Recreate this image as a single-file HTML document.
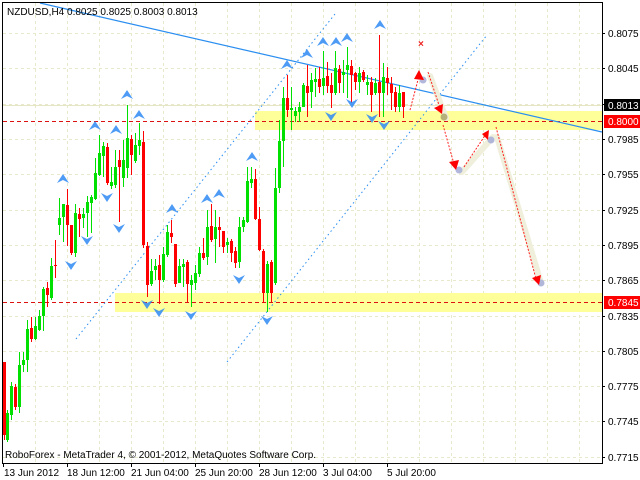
<!DOCTYPE html>
<html><head><meta charset="utf-8"><style>
html,body{margin:0;padding:0;background:#fff;width:640px;height:480px;overflow:hidden}
svg{display:block}
text{font-family:"Liberation Sans",sans-serif;font-size:10px}
</style></head><body>
<svg id="c" width="640" height="480" xmlns="http://www.w3.org/2000/svg">
<rect x="0" y="0" width="640" height="480" fill="#fff"/>
<g id="grid" stroke="#e8e8cc" stroke-width="1" stroke-dasharray="3,3"></g>
<rect x="255" y="111" width="347" height="19" fill="#ffff99"/>
<rect x="115" y="293" width="487" height="19" fill="#ffff99"/>
<line x1="3" y1="105.5" x2="602" y2="105.5" stroke="#e6e6c4" stroke-width="1"/>
<line x1="3" y1="121.5" x2="602" y2="121.5" stroke="#dd1111" stroke-dasharray="4,3"/>
<line x1="3" y1="302.5" x2="602" y2="302.5" stroke="#dd1111" stroke-dasharray="4,3"/>
<line x1="40" y1="3" x2="602" y2="132" stroke="#2a8ef0" stroke-width="1.2"/>
<line x1="76" y1="339" x2="335" y2="14" stroke="#2a8ef0" stroke-dasharray="1.5,3"/>
<line x1="227" y1="362" x2="487" y2="35" stroke="#2a8ef0" stroke-dasharray="1.5,3"/>
<g id="candles"></g>
<g id="marks"></g>
<g fill="none" stroke="#efefdc" stroke-width="6" stroke-linecap="round">
<polyline points="430,76 446,118"/>
<polyline points="462,172 493,137"/>
<polyline points="497,137 541,283"/>
</g>
<g fill="#aab0d8" opacity="0.9">
<circle cx="423" cy="80" r="3.5"/><circle cx="444" cy="117" r="3.5" fill="#b0aa70"/><circle cx="459" cy="170" r="3.5"/><circle cx="491" cy="140" r="3.5"/><circle cx="541" cy="283" r="3.5"/>
</g>
<g stroke="#ff2222" stroke-width="1" stroke-dasharray="2,1.5" fill="none">
<line x1="410" y1="110" x2="419" y2="76"/>
<line x1="428" y1="72" x2="440" y2="108"/>
<line x1="443" y1="125" x2="454" y2="164"/>
<line x1="464" y1="167" x2="486" y2="134"/>
<line x1="496" y1="127" x2="536" y2="279"/>
</g>
<g fill="#ff0000">
<polygon points="419,70 414,79 424,80"/>
<polygon points="442,114 434,108 443,104"/>
<polygon points="456,170 449,162 459,160"/>
<polygon points="489,130 482,134 488,140"/>
<polygon points="539,285 532,278 541,275"/>
</g>
<text x="418" y="47" fill="#ee2222" font-size="11" font-weight="bold">×</text>
<line x1="2.5" y1="2" x2="2.5" y2="463" stroke="#000"/>
<line x1="2" y1="2.5" x2="603" y2="2.5" stroke="#000"/>
<line x1="602.5" y1="2" x2="602.5" y2="463" stroke="#000"/>
<line x1="2" y1="463.5" x2="603" y2="463.5" stroke="#000"/>
<g id="ticks" stroke="#000"></g>
<text x="7" y="15" fill="#000" font-size="10.5">NZDUSD,H4  0.8025 0.8025 0.8003 0.8013</text>
<text x="5" y="458" fill="#000" font-size="12">RoboForex - MetaTrader 4, © 2001-2012, MetaQuotes Software Corp.</text>
<g fill="#000" font-size="9.5">
<text x="608" y="37">0.8075</text>
<text x="608" y="72">0.8045</text>
<text x="608" y="143">0.7985</text>
<text x="608" y="178">0.7955</text>
<text x="608" y="214">0.7925</text>
<text x="608" y="249">0.7895</text>
<text x="608" y="284">0.7865</text>
<text x="608" y="320">0.7835</text>
<text x="608" y="355">0.7805</text>
<text x="608" y="390">0.7775</text>
<text x="608" y="425">0.7745</text>
<text x="608" y="461">0.7715</text>
</g>
<rect x="604" y="99" width="36" height="12" fill="#000"/>
<text x="608" y="109" fill="#fff" font-size="9.5">0.8013</text>
<rect x="604" y="115" width="36" height="13" fill="#ff0000"/>
<text x="608" y="125" fill="#fff" font-size="9.5">0.8000</text>
<rect x="604" y="296" width="36" height="13" fill="#ff0000"/>
<text x="608" y="306" fill="#fff" font-size="9.5">0.7845</text>
<g fill="#000" font-size="9.5">
<text x="4" y="476">13 Jun 2012</text>
<text x="67" y="476">18 Jun 12:00</text>
<text x="131" y="476">21 Jun 04:00</text>
<text x="195" y="476">25 Jun 20:00</text>
<text x="259" y="476">28 Jun 12:00</text>
<text x="323" y="476">3 Jul 04:00</text>
<text x="387" y="476">5 Jul 20:00</text>
</g>
</svg>
<script>
var NS="http://www.w3.org/2000/svg";
function el(p,t,a){var e=document.createElementNS(NS,t);for(var k in a)e.setAttribute(k,a[k]);p.appendChild(e);return e;}
var g=document.getElementById('grid');
for(var x=35;x<602;x+=32)el(g,'line',{x1:x+.5,y1:3,x2:x+.5,y2:463});
[33,68,104,139,174,210,245,280,316,351,386,421,457].forEach(function(y){el(g,'line',{x1:3,y1:y+.5,x2:602,y2:y+.5});});
var t=document.getElementById('ticks');
[3,67,131,195,259,323,387].forEach(function(x){el(t,'line',{x1:x+.5,y1:463,x2:x+.5,y2:467});});
[33,68,104,139,174,210,245,280,316,351,386,421,457].forEach(function(y){el(t,'line',{x1:602,y1:y+.5,x2:605,y2:y+.5});});
var C=[
[4,362,435,362,440,'r'],[7,413,440,410,442,'g'],[11,386,415,382,420,'g'],[15,387,407,384,410,'r'],[19,365,407,352,413,'g'],[23,360,365,352,372,'g'],[27,329,360,320,372,'g'],[31,328,339,317,342,'r'],[35,326,339,317,340,'g'],[39,316,330,310,331,'g'],[43,289,316,287,331,'g'],[47,288,295,282,307,'r'],[51,266,298,258,300,'g'],[55,265,266,240,278,'r'],[59,218,225,198,235,'g'],[63,204,217,204,242,'g'],[67,205,225,189,246,'r'],[71,225,253,225,255,'r'],[75,213,253,204,257,'g'],[79,214,219,208,237,'r'],[83,214,218,208,228,'g'],[87,202,213,196,237,'g'],[91,197,203,195,233,'g'],[95,173,199,158,200,'g'],[99,153,175,135,176,'g'],[103,146,156,142,177,'g'],[107,147,183,143,185,'r'],[111,182,186,167,189,'g'],[115,167,185,150,188,'g'],[119,160,167,150,222,'r'],[123,160,178,140,187,'g'],[127,138,168,105,178,'g'],[131,139,155,135,175,'r'],[135,145,161,133,163,'g'],[139,140,146,123,155,'g'],[143,142,245,131,248,'r'],[147,246,285,242,297,'r'],
[151,271,284,259,286,'g'],[155,266,270,259,280,'g'],[159,265,280,255,304,'r'],[163,254,280,247,282,'g'],[167,232,255,225,257,'g'],[171,233,237,220,243,'r'],[175,244,284,244,287,'r'],[179,266,283,259,283,'g'],[183,264,267,259,287,'g'],[187,262,284,260,302,'r'],[191,280,285,275,307,'g'],[195,273,283,265,290,'g'],[199,253,274,247,277,'g'],[203,253,258,238,260,'r'],[207,227,257,210,265,'g'],[211,226,240,204,242,'r'],[215,227,239,210,263,'g'],[219,227,230,217,247,'r'],[223,231,247,231,253,'r'],[227,242,245,238,253,'g'],[231,241,253,239,262,'r'],[235,251,263,247,268,'r'],[239,227,262,217,268,'g'],[243,220,227,217,232,'g'],[247,181,222,167,223,'g'],[251,179,183,167,188,'g'],[255,179,219,169,220,'r'],[259,219,250,207,251,'r'],[263,251,293,249,303,'r'],[267,264,293,261,312,'g'],[271,262,293,260,302,'r'],[275,188,283,168,285,'g'],[279,141,188,120,193,'g'],
[283,98,141,87,167,'g'],[287,98,110,75,117,'r'],[291,108,110,87,130,'g'],[295,111,116,107,122,'g'],[299,107,112,102,122,'g'],[303,85,107,83,107,'g'],[307,86,93,65,117,'r'],[311,80,92,73,108,'g'],[315,79,82,68,97,'g'],[319,79,87,67,93,'r'],[323,78,86,51,95,'g'],[327,76,86,62,93,'r'],[331,85,93,73,108,'r'],[335,68,93,51,95,'g'],[339,69,83,65,93,'r'],[343,72,75,60,93,'g'],[347,65,70,47,98,'g'],[351,66,75,60,103,'r'],[355,73,82,72,90,'r'],[359,73,82,67,93,'g'],[363,72,80,70,82,'r'],[367,82,85,75,95,'g'],[371,82,95,77,112,'r'],[375,83,93,78,95,'g'],[379,82,93,35,117,'r'],[383,77,93,63,117,'g'],[387,78,83,67,95,'r'],[391,84,93,77,110,'r'],[395,92,107,87,112,'r'],[399,93,107,85,112,'g'],[403,92,107,92,118,'r']
];
var cg=document.getElementById('candles');
C.forEach(function(c){var col=c[5]=='r'?'#ff0000':'#00e000';
el(cg,'rect',{x:c[0],y:c[3],width:1,height:Math.max(1,c[4]-c[3]),fill:col});
el(cg,'rect',{x:c[0]-1,y:c[1],width:3,height:Math.max(1,c[2]-c[1]),fill:col});});
var mg=document.getElementById('marks');
var U=[[63,179],[95,126],[116,130],[127,95],[139,115],[172,209],[207,199],[219,194],[252,157],[287,65],[307,54],[323,42],[336,42],[347,38],[380,25]];
var D=[[71,265],[87,240],[107,197],[119,228],[147,304],[159,312],[191,315],[239,279],[267,320],[352,103],[331,116],[372,118],[384,125]];
U.forEach(function(p){var x=p[0],y=p[1];
el(mg,'polygon',{points:(x-6)+','+(y+4)+' '+x+','+(y-5)+' '+(x+6)+','+(y+4)+' '+x+','+(y+1),fill:'#2f8af5',opacity:'0.85'});});
D.forEach(function(p){var x=p[0],y=p[1];
el(mg,'polygon',{points:(x-6)+','+(y-4)+' '+x+','+(y+5)+' '+(x+6)+','+(y-4)+' '+x+','+(y-1),fill:'#2f8af5',opacity:'0.85'});});
</script>
</body></html>
